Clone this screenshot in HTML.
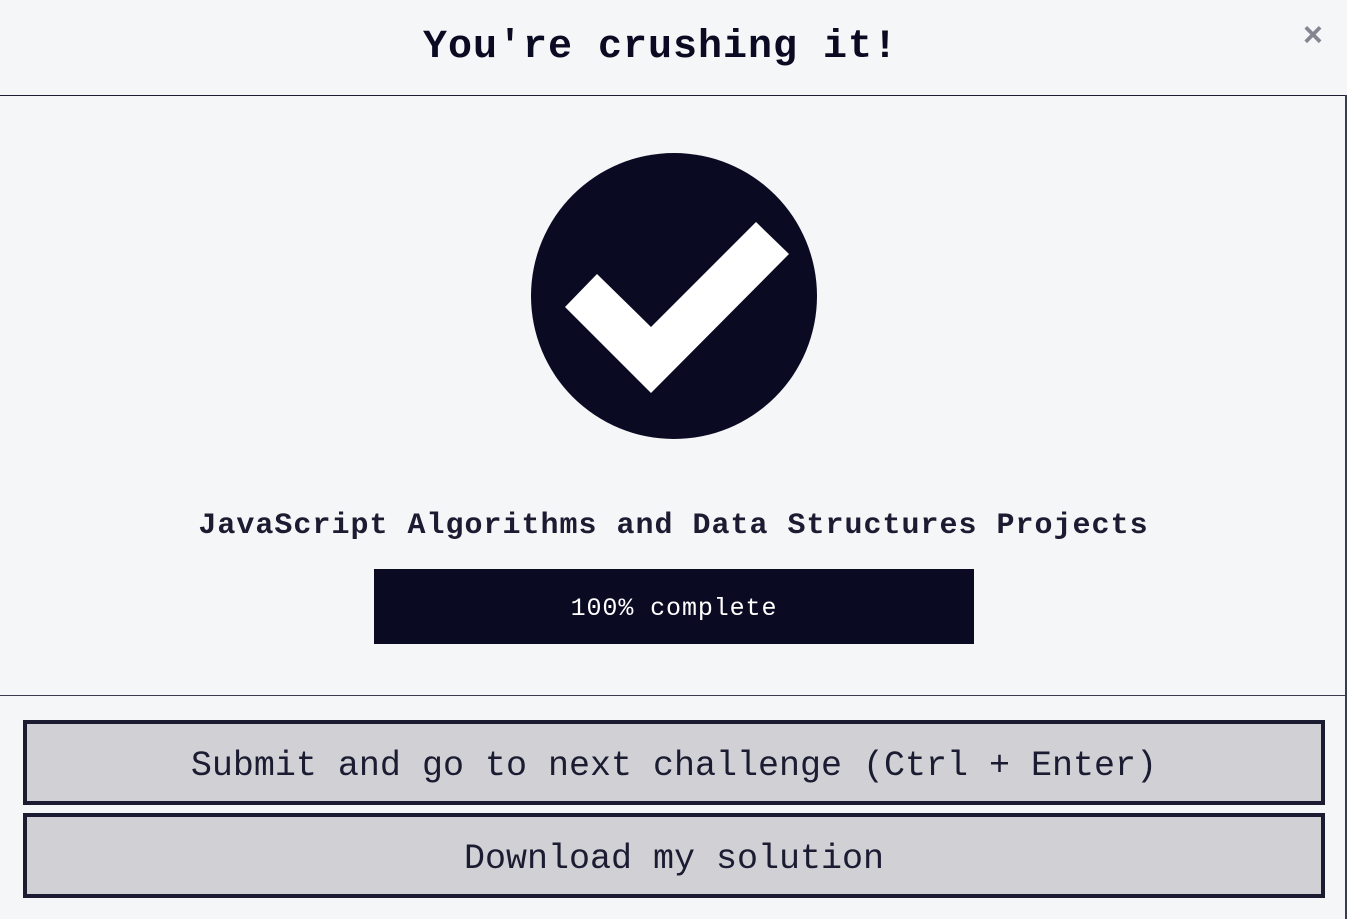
<!DOCTYPE html>
<html><head><meta charset="utf-8"><style>
*{margin:0;padding:0;box-sizing:border-box}
html,body{width:1347px;height:919px;overflow:hidden;background:#f5f6f7;font-family:"Liberation Mono",monospace;color:#1b1b32}
.a{position:absolute;white-space:nowrap}
.c{left:0;width:1347px;text-align:center}
</style></head><body>
<div class="a" style="left:0;width:1321px;text-align:center;top:23px;font-size:40px;font-weight:bold;line-height:50px;letter-spacing:1px;color:#0a0a23">You're crushing it!</div>
<div class="a" style="left:1303px;top:15px;font-size:34px;font-weight:bold;color:#858591;line-height:40px;font-family:'Liberation Sans',sans-serif">×</div>
<div class="a" style="left:0;top:95px;width:1347px;height:1px;background:#1b1b32"></div>
<div class="a" style="left:1345px;top:95px;width:2px;height:824px;background:#3b3b4f"></div>
<svg class="a" style="left:0;top:0" width="1347" height="460">
<circle cx="674" cy="296" r="143" fill="#0a0a23"/>
<polygon points="565,307 597,274 651,327 756,222 789,254 651,393" fill="#fff"/>
</svg>
<div class="a c" style="top:506px;font-size:30px;font-weight:bold;line-height:40px;letter-spacing:1px;color:#1b1b32">JavaScript Algorithms and Data Structures Projects</div>
<div class="a" style="left:374px;top:569px;width:600px;height:75px;background:#0a0a23;color:#fff;text-align:center;font-size:25px;line-height:79px;letter-spacing:0.9px">100% complete</div>
<div class="a" style="left:0;top:695px;width:1347px;height:1px;background:#3b3b4f"></div>
<div class="a" style="left:23px;top:720px;width:1302px;height:85px;background:#d0d0d5;border:4px solid #1b1b32;text-align:center;font-size:35px;line-height:84px">Submit and go to next challenge (Ctrl + Enter)</div>
<div class="a" style="left:23px;top:813px;width:1302px;height:85px;background:#d0d0d5;border:4px solid #1b1b32;text-align:center;font-size:35px;line-height:84px">Download my solution</div>
</body></html>
